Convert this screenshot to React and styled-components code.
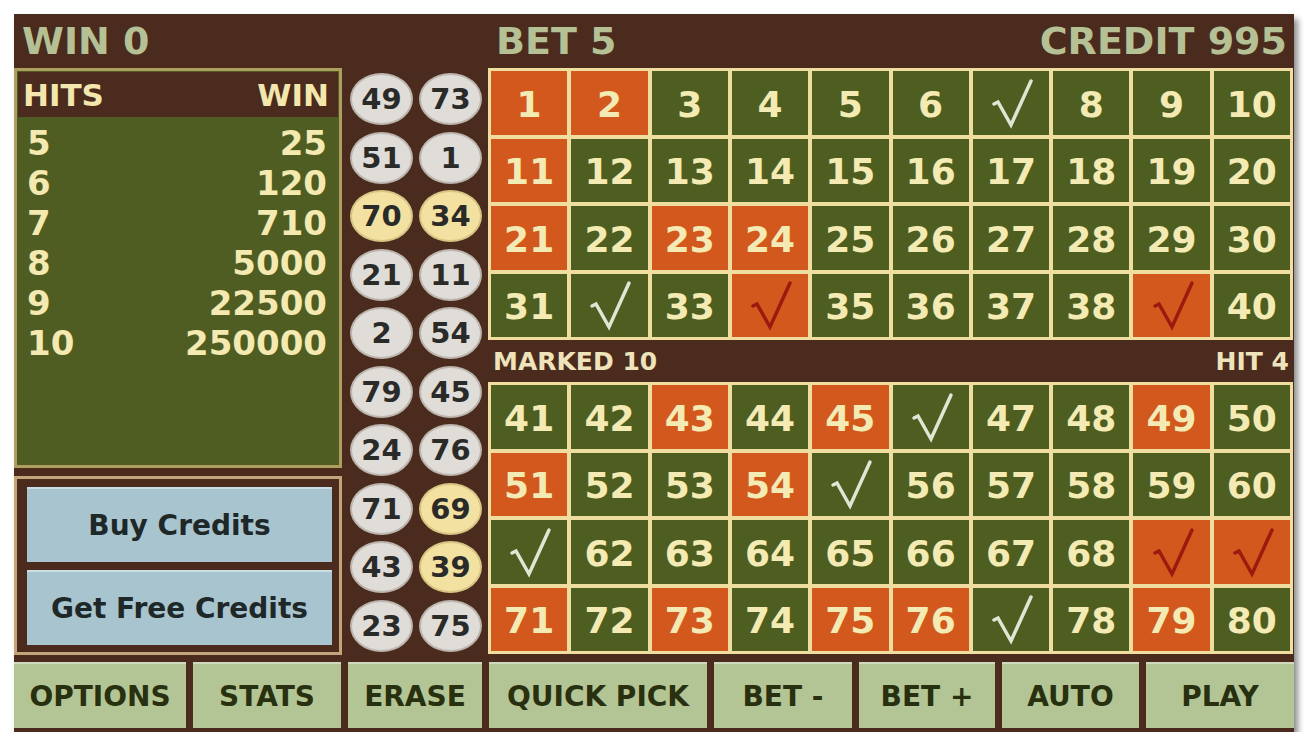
import styled, { createGlobalStyle } from "styled-components";

//Data
const drawn = [49, 73, 51, 1, 70, 34, 21, 11, 2, 54, 79, 45, 24, 76, 71, 69, 43, 39, 23, 75];
const marked = [7, 32, 34, 39, 46, 55, 61, 69, 70, 77];
const payouts = [
  [5, 25],
  [6, 120],
  [7, 710],
  [8, 5000],
  [9, 22500],
  [10, 250000],
];
const actions = ["OPTIONS", "STATS", "ERASE", "QUICK PICK", "BET -", "BET +", "AUTO", "PLAY"];

const hits = marked.filter((n) => drawn.includes(n));

function Check({ hit }) {
  return (
    <svg width="76" height="63" viewBox="0 0 76 63">
      <path
        d="M21 31 L25 29 L38 52 L58 8"
        fill="none"
        stroke={hit ? "#9a1b0e" : "#dfe6d4"}
        strokeWidth="3.5"
        strokeLinejoin="miter"
        strokeLinecap="round"
      />
    </svg>
  );
}

function Board({ from }) {
  const numbers = Array.from({ length: 40 }, (_, i) => from + i);
  return (
    <Grid>
      {numbers.map((n) => {
        const isDrawn = drawn.includes(n);
        const isMarked = marked.includes(n);
        return (
          <Cell key={n} $drawn={isDrawn}>
            {isMarked ? <Check hit={isDrawn} /> : n}
          </Cell>
        );
      })}
    </Grid>
  );
}

export default function App() {
  return (
    <>
      <GlobalStyle />
      <Panel>
        <Header>
          <span className="win">WIN 0</span>
          <span />
          <div className="right">
            <span>BET 5</span>
            <span>CREDIT 995</span>
          </div>
        </Header>

        <Main>
          <LeftColumn>
            <PayTable>
              <PayHead>
                <span>HITS</span>
                <span>WIN</span>
              </PayHead>
              <PayBody>
                {payouts.map(([h, w]) => (
                  <PayRow key={h}>
                    <span>{h}</span>
                    <span>{w}</span>
                  </PayRow>
                ))}
              </PayBody>
            </PayTable>
            <CreditBox>
              <CreditButton>Buy Credits</CreditButton>
              <CreditButton>Get Free Credits</CreditButton>
            </CreditBox>
          </LeftColumn>

          <Balls>
            {drawn.map((n) => (
              <Ball key={n} $hit={hits.includes(n)}>
                {n}
              </Ball>
            ))}
          </Balls>

          <BoardColumn>
            <Board from={1} />
            <Band>
              <span>MARKED {marked.length}</span>
              <span>HIT {hits.length}</span>
            </Band>
            <Board from={41} />
          </BoardColumn>
        </Main>

        <ActionBar>
          {actions.map((a) => (
            <ActionButton key={a}>{a}</ActionButton>
          ))}
        </ActionBar>
      </Panel>
    </>
  );
}

const GlobalStyle = createGlobalStyle`
  body {
    margin: 0;
    background: #ffffff;
    font-family: "DejaVu Sans", "Liberation Sans", sans-serif;
    font-weight: bold;
  }
`;

const Panel = styled.div`
  margin: 14px 0 0 14px;
  width: 1280px;
  height: 718px;
  background: #4a2b1e;
  box-shadow: 4px 5px 6px rgba(0, 0, 0, 0.45);
  display: flex;
  flex-direction: column;
`;

const Header = styled.div`
  height: 54px;
  display: grid;
  grid-template-columns: 328px 146px 1fr;
  align-items: center;
  color: #b5c194;
  font-size: 38px;

  .win {
    padding-left: 8px;
  }

  .right {
    display: flex;
    justify-content: space-between;
    padding: 0 7px 0 8px;
  }
`;

const Main = styled.div`
  height: 587px;
  display: grid;
  grid-template-columns: 328px 146px 805px;
`;

const LeftColumn = styled.div`
  display: flex;
  flex-direction: column;
  gap: 8px;
`;

const PayTable = styled.div`
  height: 400px;
  box-sizing: border-box;
  border: 3px solid #ae9f61;
  background: #4f5d22;
`;

const PayHead = styled.div`
  height: 45px;
  background: #4a2b1e;
  display: flex;
  justify-content: space-between;
  align-items: center;
  padding: 0 9px 0 5px;
  margin: 1px 1px 0;
  color: #f3e7ad;
  font-size: 31px;
`;

const PayBody = styled.div`
  padding-top: 6px;
`;

const PayRow = styled.div`
  height: 40px;
  display: flex;
  justify-content: space-between;
  align-items: center;
  padding: 0 12px 0 10px;
  color: #f3e9b1;
  font-size: 34px;
`;

const CreditBox = styled.div`
  height: 179px;
  box-sizing: border-box;
  border: 3px solid #c4a57a;
  padding: 8px 7px 7px 10px;
  display: flex;
  flex-direction: column;
  gap: 8px;
`;

const CreditButton = styled.div`
  flex: 1;
  background: #a8c4cf;
  border-top: 2px solid #cadde3;
  display: flex;
  align-items: center;
  justify-content: center;
  color: #1e2828;
  font-size: 28px;
`;

const Balls = styled.div`
  padding: 5px 6px 0 8px;
  display: grid;
  grid-template-columns: 63px 63px;
  grid-auto-rows: 52px;
  column-gap: 6px;
  row-gap: 6.5px;
`;

const Ball = styled.div`
  box-sizing: border-box;
  border-radius: 50%;
  background: ${(p) => (p.$hit ? "#f3e1a1" : "#e0dcd8")};
  border: 2px solid ${(p) => (p.$hit ? "#d9c583" : "#bcb5ad")};
  display: flex;
  align-items: center;
  justify-content: center;
  color: #2a2a28;
  font-size: 29px;
`;

const BoardColumn = styled.div`
  display: flex;
  flex-direction: column;
`;

const Grid = styled.div`
  height: 272px;
  box-sizing: border-box;
  padding: 3px;
  background: #efdea0;
  display: grid;
  grid-template-columns: repeat(10, 1fr);
  grid-template-rows: repeat(4, 1fr);
  gap: 4px;
`;

const Cell = styled.div`
  background: ${(p) => (p.$drawn ? "#d2581d" : "#4e5d20")};
  display: flex;
  align-items: center;
  justify-content: center;
  overflow: hidden;
  padding-top: 3px;
  box-sizing: border-box;
  color: #f4eab4;
  font-size: 36px;
`;

const Band = styled.div`
  height: 42px;
  display: flex;
  justify-content: space-between;
  align-items: center;
  padding: 0 4px 0 5px;
  color: #efe3bb;
  font-size: 25px;
`;

const ActionBar = styled.div`
  margin-top: 7px;
  height: 66px;
  display: grid;
  grid-template-columns: 172px 148px 134px 218px 138px 136px 137px 1fr;
  gap: 7px;
`;

const ActionButton = styled.div`
  background: #b3c495;
  border-top: 2px solid #d0d9bb;
  display: flex;
  align-items: center;
  justify-content: center;
  color: #28300f;
  font-size: 28px;
`;
